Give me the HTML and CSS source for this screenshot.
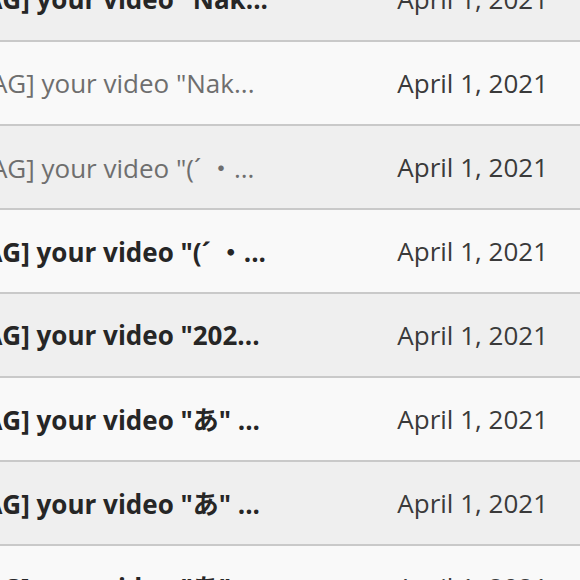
FILE: index.html
```html
<!DOCTYPE html>
<html lang="en">
<head>
<meta charset="utf-8">
<title>Inbox</title>
<link rel="stylesheet" href="styles.css">
</head>
<body>
<ul class="inbox">
  <li class="mail unread alt"><span class="subject">[VIDEO TAG] your video "Nak...</span><span class="date">April 1, 2021</span></li>
  <li class="mail"><span class="subject">[VIDEO TAG] your video "Nak...</span><span class="date">April 1, 2021</span></li>
  <li class="mail alt"><span class="subject">[VIDEO TAG] your video "(´ ・...</span><span class="date">April 1, 2021</span></li>
  <li class="mail unread"><span class="subject">[VIDEO TAG] your video "(´ ・...</span><span class="date">April 1, 2021</span></li>
  <li class="mail unread alt"><span class="subject">[VIDEO TAG] your video "202...</span><span class="date">April 1, 2021</span></li>
  <li class="mail unread"><span class="subject">[VIDEO TAG] your video "あ" ...</span><span class="date">April 1, 2021</span></li>
  <li class="mail unread alt"><span class="subject">[VIDEO TAG] your video "あ" ...</span><span class="date">April 1, 2021</span></li>
  <li class="mail unread"><span class="subject">[VIDEO TAG] your video "あ" ...</span><span class="date">April 1, 2021</span></li>
</ul>
</body>
</html>
```
FILE: styles.css
```css
html, body {
  margin: 0;
  padding: 0;
  background: #f9f9f9;
  overflow: hidden;
}

body {
  font-family: "Open Sans", "Noto Sans CJK JP", sans-serif;
  font-size: 26px;
}

.inbox {
  list-style: none;
  margin: -42px 0 0 -108px;
  padding: 0;
}

.mail {
  display: flex;
  align-items: center;
  justify-content: space-between;
  height: 82px;
  padding-right: 32px;
  border-bottom: 2px solid #c9c9c9;
  background: #f9f9f9;
  white-space: nowrap;
}

.mail.alt {
  background: #efefef;
}

.subject {
  margin-left: -7px;
  color: #6e6e6e;
  font-weight: 400;
}

.unread .subject {
  margin-left: -18px;
  color: #262626;
  font-weight: 700;
}

.date {
  color: #3a3a3a;
}
```
